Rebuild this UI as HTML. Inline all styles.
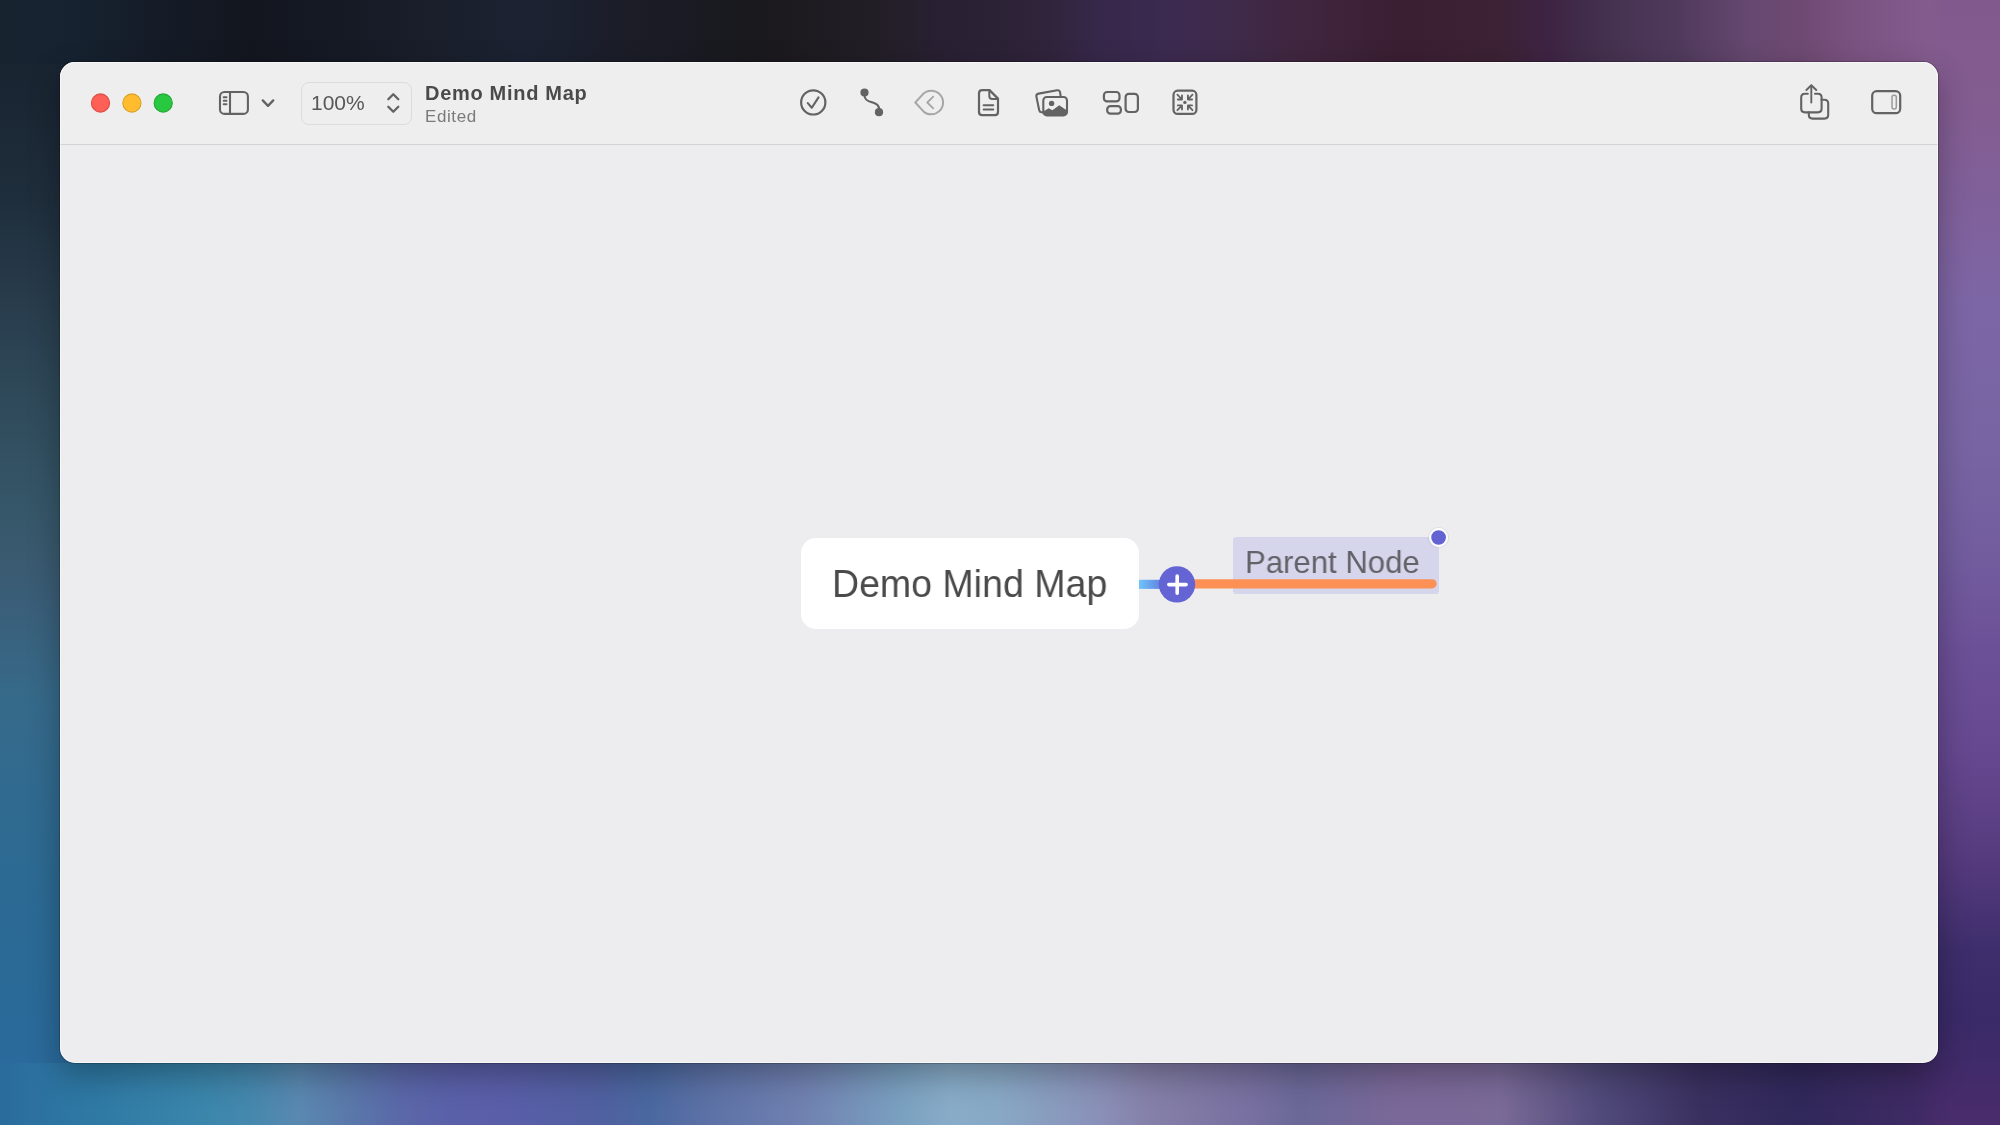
<!DOCTYPE html>
<html><head><meta charset="utf-8">
<style>
html,body{margin:0;padding:0;}
body{width:2000px;height:1125px;position:relative;overflow:hidden;background:#8a8aa0;font-family:"Liberation Sans",sans-serif;}
.bg{position:absolute;}
#bt{left:0;top:0;width:2000px;height:64px;z-index:2;-webkit-mask-image:linear-gradient(to right,#000 1925px,transparent 1945px);mask-image:linear-gradient(to right,#000 1925px,transparent 1945px);background:linear-gradient(to right,#172430 0px,#162230 75px,#151c28 150px,#13161f 250px,#141822 300px,#161a25 350px,#1a1e2a 420px,#1c2232 520px,#1c2130 560px,#1b1d28 620px,#19191e 750px,#1d1a20 800px,#221e26 870px,#241f2a 900px,#2a2034 950px,#2c2236 1000px,#30243c 1050px,#36284a 1100px,#3c2a50 1170px,#3e2a4a 1230px,#40263f 1300px,#3a1e32 1400px,#3c2234 1500px,#3e2444 1550px,#43304e 1600px,#503a5c 1680px,#664870 1750px,#6e4a72 1800px,#7a5280 1850px,#80588a 1900px,#86608f 1950px,#8a6595 2000px);}
#bb{left:0;top:1063px;width:2000px;height:62px;-webkit-mask-image:linear-gradient(to right,#000 1915px,transparent 1950px);mask-image:linear-gradient(to right,#000 1915px,transparent 1950px);z-index:2;background:linear-gradient(to right,#2a6c9c 0px,#2f7aa5 100px,#3a85ab 200px,#4588ae 250px,#5a88b0 300px,#5a78aa 350px,#5a68a8 400px,#5a60a8 450px,#5a5ea8 500px,#5060a0 600px,#4a68a0 650px,#5a70a5 700px,#7080b0 800px,#7aa0c0 900px,#88acc8 950px,#88a8c5 1000px,#8a90b8 1100px,#8580a8 1150px,#7870a0 1250px,#6a6898 1300px,#7a6898 1400px,#7a6a98 1500px,#504a7a 1600px,#3a3060 1700px,#30285a 1800px,#3c2a62 1900px,#4a2c6c 2000px);}
#bl{left:0;top:0;width:300px;height:1125px;z-index:1;background:linear-gradient(to bottom,#17222e 0px,#1a2633 100px,#1f2e3c 200px,#283c4c 300px,#2f4a5a 400px,#355668 500px,#3a5a70 560px,#3a5e78 600px,#366a8a 700px,#306a90 800px,#2c6a94 900px,#2a6a98 1000px,#2a6aa0 1125px);}
#br{left:1700px;top:0;width:300px;height:1125px;z-index:1;background:linear-gradient(to bottom,#82598c 0px,#835c90 100px,#80609a 200px,#7d66a5 300px,#7864a2 450px,#725c9e 560px,#6c5097 650px,#664890 750px,#583c80 850px,#3e2e6c 950px,#3a2a68 1020px,#4a2c6c 1125px);}
#win{position:absolute;z-index:5;left:60px;top:62px;width:1878px;height:1001px;border-radius:15px;background:#ededef;overflow:hidden;box-shadow:0 0 0 1px rgba(0,0,0,0.2),0 12px 32px rgba(0,0,0,0.3);}
#tb{position:absolute;left:0;top:0;width:1878px;height:82px;background:#eeeeee;border-bottom:1px solid #d3d3d5;}
.t{position:absolute;white-space:nowrap;line-height:1;will-change:transform;}
#ov{position:absolute;z-index:6;left:0;top:0;width:2000px;height:1125px;}
</style></head>
<body>
<div class="bg" id="bt"></div>
<div class="bg" id="bb"></div>
<div class="bg" id="bl"></div>
<div class="bg" id="br"></div>
<div id="win">
  <div id="tb"></div>
</div>
<div id="ov">
  <div style="position:absolute;left:60px;top:62px;width:1878px;height:1001px;box-sizing:border-box;border-radius:15px;border:1px solid rgba(255,255,255,0.55);"></div>
  <!-- zoom box -->
  <div style="position:absolute;left:301px;top:82px;width:109px;height:41px;border:1px solid #dcdcdc;border-radius:8px;box-sizing:content-box;"></div>
  <div class="t" id="zoomtxt" style="left:311px;top:92px;font-size:21px;color:#585858;">100%</div>
  <div class="t" id="title" style="left:425px;top:83px;font-size:20px;font-weight:bold;color:#4a4a4a;letter-spacing:0.7px;">Demo Mind Map</div>
  <div class="t" id="edited" style="left:425px;top:107.5px;font-size:17px;color:#7a7a7a;letter-spacing:0.6px;">Edited</div>

  <!-- nodes -->
  <div style="position:absolute;left:801px;top:538px;width:338px;height:91px;background:#ffffff;border-radius:15px;"></div>
  <div class="t" id="n1" style="left:831.5px;top:564px;font-size:39px;color:#4a4a4a;transform:scaleX(0.962);transform-origin:0 0;">Demo Mind Map</div>
  <div style="position:absolute;left:1233px;top:537px;width:206px;height:57px;background:#d5d5eb;border-radius:3px;"></div>
  <div class="t" id="n2" style="left:1245px;top:547px;font-size:31.7px;color:#626268;transform:scaleX(0.982);transform-origin:0 0;">Parent Node</div>

  <svg width="2000" height="1125" style="position:absolute;left:0;top:0;">
    <defs>
      <linearGradient id="blu" x1="0" x2="1" y1="0" y2="0">
        <stop offset="0" stop-color="#70c4fa"/>
        <stop offset="1" stop-color="#5a6cd4"/>
      </linearGradient>
    </defs>
    <!-- traffic lights -->
    <circle cx="100.5" cy="103" r="9.1" fill="#fe5f57" stroke="#de4a42" stroke-width="1.1"/>
    <circle cx="131.9" cy="103" r="9.1" fill="#febc2e" stroke="#dca024" stroke-width="1.1"/>
    <circle cx="163.2" cy="103" r="9.1" fill="#28c840" stroke="#1fa832" stroke-width="1.1"/>

    <g fill="none" stroke="#636363" stroke-width="2.1" stroke-linecap="round" stroke-linejoin="round">
      <!-- sidebar left -->
      <rect x="220" y="92" width="27.9" height="21.9" rx="4.5"/>
      <line x1="230" y1="92" x2="230" y2="113.9"/>
      <line x1="223.7" y1="97.25" x2="226.5" y2="97.25" stroke-width="2"/>
      <line x1="223.7" y1="100.75" x2="226.5" y2="100.75" stroke-width="2"/>
      <line x1="223.7" y1="104.2" x2="226.5" y2="104.2" stroke-width="2"/>
      <polyline points="262.75,100.4 268,105.9 273.25,100.4" stroke-width="2.3"/>
      <!-- stepper -->
      <polyline points="388.3,99.3 393.3,94.2 398.3,99.3" stroke-width="2.3"/>
      <polyline points="388.3,106.7 393.3,111.8 398.3,106.7" stroke-width="2.3"/>
      <!-- check circle -->
      <circle cx="813.25" cy="102.4" r="12.1" stroke-width="2.2"/>
      <polyline points="807.8,103.1 811.8,107.7 818.5,97.4" stroke-width="2.1"/>
      <!-- connection -->
      <path d="M864.5 92.5 L864.5 96 Q865 100.5 871 102 L873.5 102.8 Q879 104.5 879 109 L879 112" stroke-width="2.1"/>
      <!-- tag (light) -->
      <path d="M922.8 94.3 A11.8 11.8 0 1 1 922.8 110.7 L915.3 102.5 Z" stroke="#a6a6a6" stroke-width="2"/>
      <polyline points="933.2,96.6 927.3,102.5 933.2,108.3" stroke="#a6a6a6" stroke-width="1.8"/>
      <!-- document -->
      <path d="M982.3 90.1 L989.5 90.1 L998 98.6 L998 112 Q998 115.2 994.8 115.2 L982.2 115.2 Q979 115.2 979 112 L979 93.3 Q979 90.1 982.3 90.1 Z" stroke-width="2.2"/>
      <path d="M989.3 90.1 L989.3 96 Q989.3 99 992.3 99 L998 99" stroke-width="2"/>
      <line x1="983.6" y1="105.3" x2="993.3" y2="105.3" stroke-width="1.9"/>
      <line x1="983.6" y1="109.5" x2="993.3" y2="109.5" stroke-width="1.9"/>
      <!-- photos -->
      <path d="M1042.5 112.3 L1041.3 112.3 Q1039.6 112.1 1039.2 110.3 L1036.4 96.6 Q1036 94.1 1038.6 93.6 L1057.2 90.3 Q1059.6 90 1060.1 92.4 L1060.8 97" stroke-width="2.1"/>
      <rect x="1043.3" y="97" width="23.7" height="18.4" rx="3.5" stroke-width="2.1"/>
      <!-- layout -->
      <rect x="1103.9" y="92" width="15.6" height="9.4" rx="3.2" stroke-width="2.2"/>
      <rect x="1107.2" y="106.2" width="13.7" height="7.5" rx="3.2" stroke-width="2.2"/>
      <rect x="1125.6" y="93.9" width="12.3" height="18.1" rx="3.2" stroke-width="2.2"/>
      <!-- collapse -->
      <rect x="1173.5" y="90.7" width="22.9" height="23.2" rx="4.2" stroke-width="2.2"/>
      <g stroke-width="1.8">
        <path d="M1177.4 94.6 L1181.6 99 M1182 95.3 L1182 99.5 L1177.8 99.5"/>
        <path d="M1192.5 94.6 L1188.3 99 M1187.9 95.3 L1187.9 99.5 L1192.1 99.5"/>
        <path d="M1177.4 110.2 L1181.6 105.8 M1182 109.6 L1182 105.4 L1177.8 105.4"/>
        <path d="M1192.5 110.2 L1188.3 105.8 M1187.9 109.6 L1187.9 105.4 L1192.1 105.4"/>
      </g>
      <!-- share -->
      <path d="M1807.8 93.8 L1805 93.8 Q1801.2 93.8 1801.2 97.6 L1801.2 108.6 Q1801.2 112.4 1805 112.4 L1817.8 112.4 Q1821.6 112.4 1821.6 108.6 L1821.6 97.6 Q1821.6 93.8 1817.8 93.8 L1815 93.8" stroke-width="2.1"/>
      <path d="M1821.6 99.8 L1824.4 99.8 Q1828.2 99.8 1828.2 103.6 L1828.2 114.8 Q1828.2 118.6 1824.4 118.6 L1812.6 118.6 Q1808.8 118.6 1808.8 114.8 L1808.8 112.4" stroke-width="2.1"/>
      <line x1="1811.3" y1="85.6" x2="1811.3" y2="102.6" stroke-width="1.9"/>
      <polyline points="1806.4,90 1811.3,85.2 1816.3,90" stroke-width="1.9"/>
      <!-- sidebar right -->
      <rect x="1872.2" y="91.1" width="28" height="22.1" rx="4.5" stroke-width="2.2"/>
      <rect x="1892" y="95.2" width="4.3" height="13.8" rx="2" stroke="#9a9a9a" stroke-width="1.5"/>
    </g>
    <g fill="#636363">
      <circle cx="864.5" cy="92.5" r="4.1"/>
      <circle cx="879" cy="112.2" r="4.1"/>
      <circle cx="1051.6" cy="103.4" r="2.7"/>
      <path d="M1043.3 111.6 L1048.7 108.2 L1052.4 110.3 L1059.2 105.2 L1067 110.6 L1067 112 Q1067 115.4 1063.5 115.4 L1046.8 115.4 Q1043.3 115.4 1043.3 112 Z"/>
      <circle cx="1184.9" cy="102.4" r="1.7"/>
    </g>

    <!-- connector -->
    <rect x="1139" y="579.8" width="30" height="9.1" fill="url(#blu)"/>
    <line x1="1190" y1="583.8" x2="1432" y2="583.8" stroke="#fd9155" stroke-width="9.3" stroke-linecap="round"/>
    <circle cx="1177" cy="584.4" r="18.2" fill="#6464d4"/>
    <path d="M1177.2 576 V593.3 M1168.8 584.6 H1186.1" stroke="#ffffff" stroke-width="3.6" stroke-linecap="round"/>
    <circle cx="1438.6" cy="537.5" r="10.5" fill="rgba(0,0,0,0.07)"/>
    <circle cx="1438.6" cy="537.5" r="8.5" fill="#6262d2" stroke="#fbfbff" stroke-width="2.3"/>
  </svg>
</div>
</body></html>
